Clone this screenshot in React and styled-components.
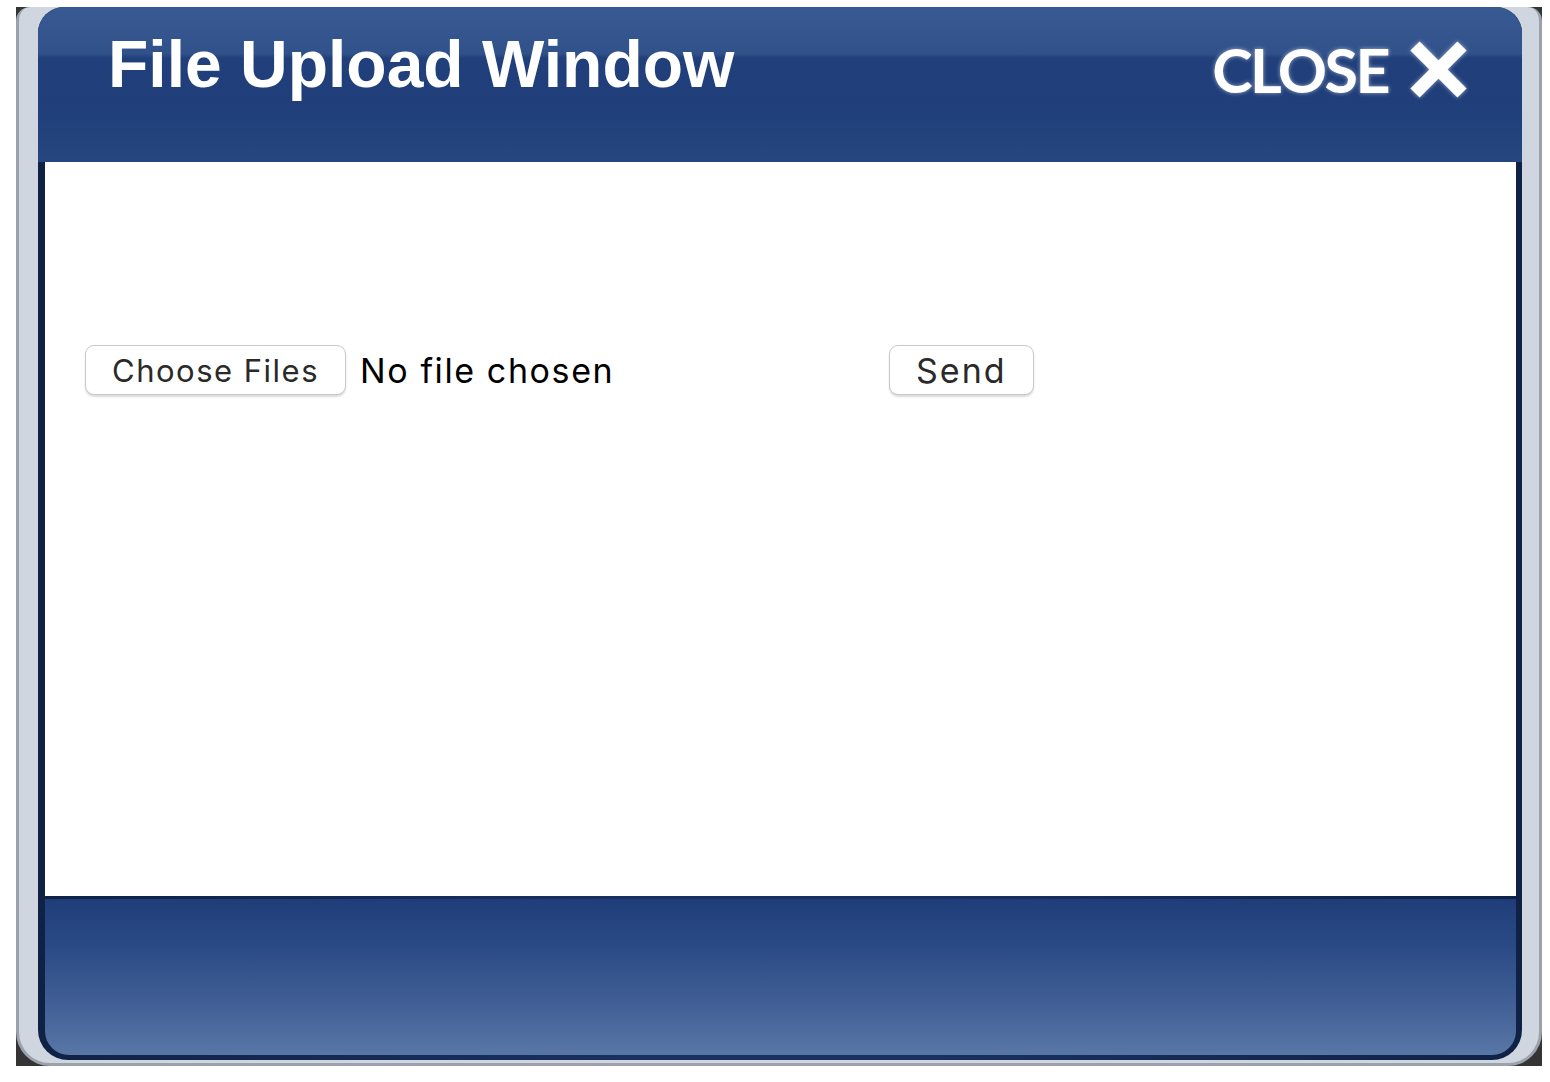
import React from 'react'
import styled, { createGlobalStyle } from 'styled-components'

const GlobalStyle = createGlobalStyle`
    html, body {
        margin: 0;
        padding: 0;
        background: #ffffff;
    }
    body {
        font-family: "Liberation Sans", Arial, sans-serif;
    }
`

const CloseIcon = () => (
    <svg width="57" height="57" viewBox="0 0 57 57">
        <g stroke="#ffffff" strokeWidth="13" strokeLinecap="butt">
            <line x1="5" y1="5" x2="52" y2="52" />
            <line x1="52" y1="5" x2="5" y2="52" />
        </g>
    </svg>
)

const App = () => {
    return (
        <Page>
            <GlobalStyle />
            <Backdrop>
                <Frame>
                    <Panel>
                        <Header>
                            <Title>File Upload Window</Title>
                            <CloseButton>
                                <span>CLOSE</span>
                                <CloseIcon />
                            </CloseButton>
                        </Header>
                        <Body>
                            <UploadRow>
                                <FilePicker>
                                    <SysButton $pad={26} $size={31} $spacing={1.5}>Choose Files</SysButton>
                                    <FileName>No file chosen</FileName>
                                </FilePicker>
                                <SysButton $pad={26} $size={34} $spacing={2}>Send</SysButton>
                            </UploadRow>
                        </Body>
                        <Footer />
                    </Panel>
                </Frame>
            </Backdrop>
        </Page>
    )
}

export default App

const Page = styled.div`
    padding: 7px 0 0 16px;
`

const Backdrop = styled.div`
    width: 1526px;
    height: 1059px;
    background: #343434;
`

const Frame = styled.div`
    box-sizing: border-box;
    height: 100%;
    display: flex;
    padding: 0 17px 3px 19px;
    background: #cfd6df;
    border: 3px solid #9ba2ab;
    border-top: none;
    border-radius: 14px 14px 34px 34px;
`

const Panel = styled.div`
    flex: 1;
    display: flex;
    flex-direction: column;
    background: linear-gradient(to right, #0f2246, #1a3060 40%, #1a3060 60%, #0f2246);
    border-radius: 26px 26px 30px 30px;
    overflow: hidden;
`

const Header = styled.div`
    height: 155px;
    flex-shrink: 0;
    display: flex;
    align-items: flex-start;
    justify-content: space-between;
    padding: 24px 55px 0 70px;
    box-sizing: border-box;
    background: linear-gradient(
        to bottom,
        #385a92 0%,
        #31518b 30%,
        #21407b 33%,
        #1f3e7a 60%,
        #25467f 100%
    );
`

const Title = styled.h1`
    margin: 0;
    font-family: "Liberation Sans", Arial, sans-serif;
    font-weight: 700;
    font-size: 66px;
    line-height: 1;
    color: #ffffff;
    letter-spacing: 0;
`

const CloseButton = styled.div`
    display: flex;
    align-items: center;
    gap: 22px;
    margin-top: 8px;
    height: 61px;
    cursor: pointer;
    filter: drop-shadow(0 0 2px rgba(255, 255, 255, 0.55));

    span {
        font-family: Lato, "Liberation Sans", sans-serif;
        font-weight: 700;
        font-size: 61px;
        line-height: 1;
        letter-spacing: -2.5px;
        color: #ffffff;
    }
`

const Body = styled.div`
    height: 734px;
    flex-shrink: 0;
    margin: 0 6px 0 7px;
    background: #ffffff;
`

const UploadRow = styled.div`
    display: flex;
    align-items: center;
    padding: 183px 0 0 40px;
`

const FilePicker = styled.div`
    width: 804px;
    display: flex;
    align-items: center;
`

const SysButton = styled.button`
    height: 50px;
    box-sizing: border-box;
    padding: 0 ${(p) => p.$pad}px;
    background: #ffffff;
    border: 1.5px solid #c9c9c9;
    border-radius: 9px;
    box-shadow: 0 2px 2px rgba(0, 0, 0, 0.14);
    font-family: Inter, "Liberation Sans", sans-serif;
    font-size: ${(p) => p.$size}px;
    letter-spacing: ${(p) => p.$spacing}px;
    color: #2a2a2a;
    cursor: pointer;
`

const FileName = styled.span`
    margin-left: 14px;
    font-family: Inter, "Liberation Sans", sans-serif;
    font-size: 34px;
    letter-spacing: 1.6px;
    color: #000000;
`

const Footer = styled.div`
    height: 156px;
    flex-shrink: 0;
    margin: 3px 6px 5px 7px;
    border-radius: 0 0 24px 24px;
    background: linear-gradient(
        to bottom,
        #1f3d79 0%,
        #2a4a86 30%,
        #405e94 65%,
        #5876a6 100%
    );
`
